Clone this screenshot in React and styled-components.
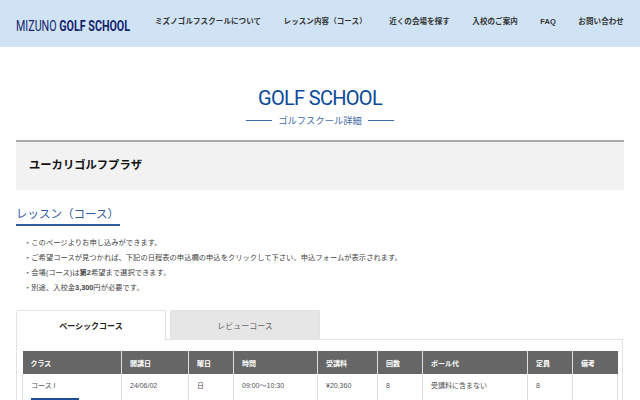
import React from "react";
import styled, { createGlobalStyle } from "styled-components";

const navItems = [
  "ミズノゴルフスクールについて",
  "レッスン内容（コース）",
  "近くの会場を探す",
  "入校のご案内",
  "FAQ",
  "お問い合わせ",
];

const notes = [
  "このページよりお申し込みができます。",
  "ご希望コースが見つかれば、下記の日程表の申込欄の申込をクリックして下さい。申込フォームが表示されます。",
  <>会場(コース)は<b>第2</b>希望まで選択できます。</>,
  <>別途、入校金<b>3,300</b>円が必要です。</>,
];

const columns = [
  { label: "クラス", width: 99 },
  { label: "開講日", width: 67 },
  { label: "曜日", width: 45 },
  { label: "時間", width: 84 },
  { label: "受講料", width: 60 },
  { label: "回数", width: 45 },
  { label: "ボール代", width: 105 },
  { label: "定員", width: 45 },
  { label: "備考", width: 45 },
];

const App = () => {
  return (
    <>
      <GlobalStyle />
      <Header>
        <LogoSlot>
          <Logo>
            MIZUNO <b>GOLF SCHOOL</b>
          </Logo>
        </LogoSlot>
        <Nav>
          {navItems.map((item) => (
            <NavItem key={item}>{item}</NavItem>
          ))}
        </Nav>
      </Header>
      <Main>
        <PageTitle>GOLF SCHOOL</PageTitle>
        <SubTitle>ゴルフスクール詳細</SubTitle>
        <VenueBox>ユーカリゴルフプラザ</VenueBox>
        <SectionHeading>レッスン（コース）</SectionHeading>
        <NoteList>
          {notes.map((note, i) => (
            <li key={i}>{note}</li>
          ))}
        </NoteList>
        <Tabs>
          <Tab $active>ベーシックコース</Tab>
          <Tab>レビューコース</Tab>
        </Tabs>
        <Panel>
          <Table>
            <colgroup>
              {columns.map((col) => (
                <col key={col.label} style={{ width: col.width }} />
              ))}
            </colgroup>
            <thead>
              <tr>
                {columns.map((col) => (
                  <Th key={col.label}>{col.label}</Th>
                ))}
              </tr>
            </thead>
            <tbody>
              <tr>
                <Td>
                  コース I
                  <ApplyButton />
                </Td>
                <Td>24/06/02</Td>
                <Td>日</Td>
                <Td>09:00～10:30</Td>
                <Td>¥20,360</Td>
                <Td>8</Td>
                <Td>受講料に含まない</Td>
                <Td>8</Td>
                <Td></Td>
              </tr>
            </tbody>
          </Table>
        </Panel>
      </Main>
    </>
  );
};

const GlobalStyle = createGlobalStyle`
  html, body {
    margin: 0;
    height: 400px;
    overflow: hidden;
    background: #fff;
    font-family: "Liberation Sans", "Noto Sans CJK JP", sans-serif;
  }
  * {
    box-sizing: border-box;
  }
`;

const Header = styled.header`
  height: 47px;
  background: #cfe3f4;
  padding: 0 16px;
  display: flex;
  align-items: center;
  justify-content: space-between;
`;

const LogoSlot = styled.div`
  width: 116px;
  flex-shrink: 0;
  padding-top: 5px;
`;

const Logo = styled.div`
  font-family: "Roboto", sans-serif;
  font-size: 14px;
  line-height: 16px;
  color: #14236e;
  white-space: nowrap;
  width: 156px;
  transform: scaleX(0.765);
  transform-origin: left center;

  b {
    font-weight: 700;
  }
`;

const Nav = styled.nav`
  display: flex;
  width: 469px;
  justify-content: space-between;
  margin-bottom: 3px;
`;

const NavItem = styled.a`
  font-size: 7.5px;
  line-height: 12px;
  font-weight: 700;
  color: #333;
  white-space: nowrap;
  letter-spacing: 0.1px;
`;

const Main = styled.main`
  padding: 0 16px;
`;

const PageTitle = styled.h1`
  margin: 39px 0 0;
  text-align: center;
  font-family: "Roboto", sans-serif;
  font-size: 20px;
  line-height: 24px;
  font-weight: 400;
  letter-spacing: -0.7px;
  color: #0b4a9a;
`;

const SubTitle = styled.div`
  margin-top: 3px;
  height: 14px;
  display: flex;
  align-items: center;
  justify-content: center;
  gap: 6px;
  font-size: 9.3px;
  color: #3f6aa8;

  &::before,
  &::after {
    content: "";
    width: 26px;
    height: 1px;
    background: #3f6aa8;
  }
`;

const VenueBox = styled.div`
  margin-top: 13px;
  height: 50px;
  border-top: 2px solid #aaa;
  background: #f2f2f2;
  padding: 0 13px 5px;
  display: flex;
  align-items: center;
  font-size: 11.3px;
  font-weight: 700;
  color: #111;
`;

const SectionHeading = styled.h2`
  margin: 15px 0 0;
  width: 104px;
  height: 21px;
  border-bottom: 2px solid #2f5a9e;
  font-size: 11.5px;
  line-height: 19px;
  font-weight: 400;
  color: #2f5a9e;
  white-space: nowrap;
`;

const NoteList = styled.ul`
  list-style: none;
  margin: 9px 0 0;
  padding: 0 0 0 8px;
  font-size: 7.3px;
  line-height: 15px;
  color: #444;

  li::before {
    content: "・";
  }
`;

const Tabs = styled.div`
  margin-top: 15px;
  display: flex;
  gap: 4px;
`;

const Tab = styled.div`
  width: 150px;
  height: 30px;
  display: flex;
  align-items: center;
  justify-content: center;
  font-size: 8px;
  font-weight: ${(p) => (p.$active ? 700 : 400)};
  border: 1px solid #e2e2e2;
  border-bottom: none;
  border-radius: 2px 2px 0 0;
  color: ${(p) => (p.$active ? "#222" : "#666")};
  background: ${(p) => (p.$active ? "#fff" : "#e6e6e6")};
  margin-bottom: -1px;
  position: relative;
  z-index: ${(p) => (p.$active ? 1 : 0)};
`;

const Panel = styled.div`
  width: 607px;
  border: 1px solid #e2e2e2;
  padding: 11px 5px;
`;

const Table = styled.table`
  width: 595px;
  table-layout: fixed;
  border-collapse: collapse;
`;

const Th = styled.th`
  height: 23px;
  padding: 0 8px;
  background: #666;
  border-left: 1px solid #ddd;
  color: #fff;
  font-size: 7px;
  font-weight: 700;
  text-align: left;

  &:first-child {
    border-left: none;
  }
`;

const Td = styled.td`
  padding: 5.5px 8px;
  border: 1px solid #ddd;
  border-top: none;
  font-size: 7px;
  line-height: 11px;
  color: #555;
  vertical-align: top;
`;

const ApplyButton = styled.div`
  margin-top: 7.5px;
  width: 48px;
  height: 16px;
  background: #1e4f96;
`;

export default App;
